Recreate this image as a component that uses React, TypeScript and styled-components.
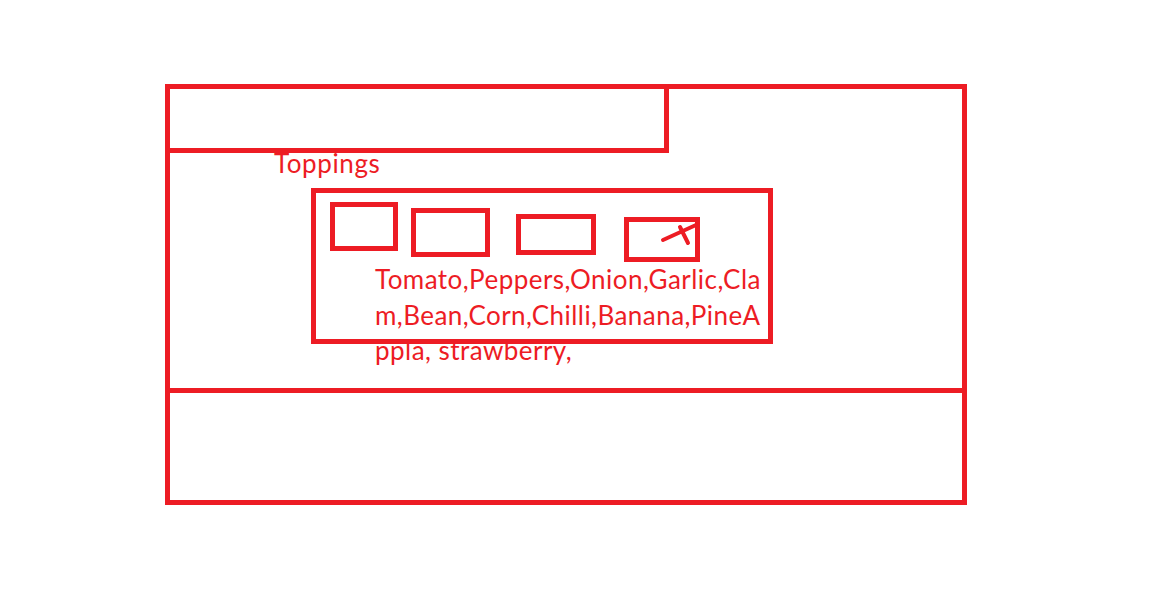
import React from 'react';
import styled, { createGlobalStyle } from 'styled-components';

const RED = '#ED1C24'

const GlobalStyle = createGlobalStyle`
    html, body {
        margin: 0;
        padding: 0;
        background: #ffffff;
    }
    body {
        font-family: Lato, "Open Sans", sans-serif;
        color: ${RED};
    }
    * {
        box-sizing: border-box;
    }
`

type BoxSpec = {
    w: number
    h: number
    top: number
    gap: number
    crossed?: boolean
}

const boxes: BoxSpec[] = [
    { w: 68, h: 49, top: 9, gap: 0 },
    { w: 79, h: 49, top: 15, gap: 13 },
    { w: 80, h: 41, top: 21, gap: 26 },
    { w: 76, h: 45, top: 24, gap: 28, crossed: true },
]

const toppings = 'Tomato,Peppers,Onion,Garlic,Clam,Bean,Corn,Chilli,Banana,PineAppla, strawberry,'

export default function App() {
    return (
        <>
            <GlobalStyle />
            <Page>
                <Frame>
                    <Main>
                        <Header />
                        <Label>Toppings</Label>
                        <ToppingsPanel>
                            <BoxRow>
                                {boxes.map((b, i) => (
                                    <Choice key={i} $w={b.w} $h={b.h} $top={b.top} $gap={b.gap}>
                                        {b.crossed && (
                                            <Mark viewBox="0 0 66 35" width="66" height="35">
                                                <path d="M34 18 L67 3" />
                                                <path d="M51 5 L59 21" />
                                            </Mark>
                                        )}
                                    </Choice>
                                ))}
                            </BoxRow>
                            <ToppingList>{toppings}</ToppingList>
                        </ToppingsPanel>
                    </Main>
                    <Footer />
                </Frame>
            </Page>
        </>
    )
}

const Page = styled.div`
    padding: 84px 0 0 165px;
    min-height: 613px;
`
const Frame = styled.div`
    display: flex;
    flex-direction: column;
    width: 802px;
`
const Main = styled.div`
    display: flex;
    flex-direction: column;
    align-items: flex-start;
    height: 304px;
    border: 5px solid ${RED};
    border-bottom: none;
`
const Header = styled.div`
    width: 499px;
    height: 64px;
    border-right: 5px solid ${RED};
    border-bottom: 5px solid ${RED};
`
const Label = styled.div`
    margin-left: 104px;
    font-size: 26px;
    letter-spacing: 0.6px;
    line-height: 20px;
    height: 20px;
`
const ToppingsPanel = styled.div`
    margin: 15px 0 0 141px;
    width: 462px;
    height: 156px;
    border: 5px solid ${RED};
`
const BoxRow = styled.div`
    display: flex;
    align-items: flex-start;
    padding-left: 14px;
`
const Choice = styled.div<{ $w: number; $h: number; $top: number; $gap: number }>`
    position: relative;
    flex: none;
    width: ${p => p.$w}px;
    height: ${p => p.$h}px;
    margin-top: ${p => p.$top}px;
    margin-left: ${p => p.$gap}px;
    border: 5px solid ${RED};
`
const Mark = styled.svg`
    position: absolute;
    left: 0;
    top: 0;
    overflow: visible;
    fill: none;
    stroke: ${RED};
    stroke-width: 4;
    stroke-linecap: round;
`
const ToppingList = styled.div`
    margin: 0 0 0 59px;
    width: 392px;
    font-size: 26px;
    letter-spacing: 0.45px;
    line-height: 35.5px;
    word-break: break-all;
`
const Footer = styled.div`
    height: 117px;
    border: 5px solid ${RED};
`
